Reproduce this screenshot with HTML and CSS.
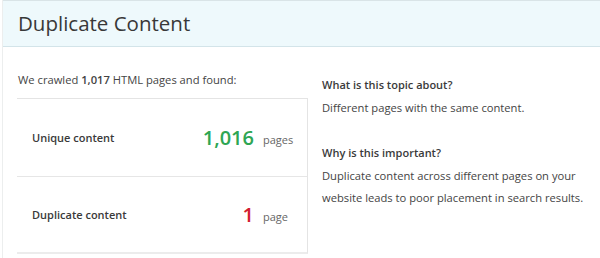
FILE: index.html
```html
<!DOCTYPE html>
<html lang="en">
<head>
    <meta charset="UTF-8">
    <title>Duplicate Content</title>
    <link rel="stylesheet" href="styles.css">
</head>
<body>
    <div class="report-card">
        <div class="report-header">
            <h1>Duplicate Content</h1>
        </div>

        <div class="report-body">
            <div class="summary">
                <p class="intro">We crawled <strong>1,017</strong> HTML pages and found:</p>
                <div class="stats-box">
                    <div class="stat-row">
                        <span class="stat-label">Unique content</span>
                        <span class="stat-value good">1,016</span>
                        <span class="stat-unit">pages</span>
                    </div>
                    <div class="stat-row">
                        <span class="stat-label">Duplicate content</span>
                        <span class="stat-value bad">1</span>
                        <span class="stat-unit">page</span>
                    </div>
                </div>
            </div>

            <div class="explain">
                <h3>What is this topic about?</h3>
                <p>Different pages with the same content.</p>
                <h3 class="second">Why is this important?</h3>
                <p>Duplicate content across different pages on your website leads to poor placement in search results.</p>
            </div>
        </div>
    </div>
</body>
</html>
```

FILE: styles.css
```css
body {
    margin: 0;
    font-family: 'Open Sans', 'Noto Sans', Arial, sans-serif;
    color: #444;
    background-color: #fff;
}
.report-card {
    margin-left: 2px;
    border-left: 1px solid #eceeee;
    min-height: 258px;
}
.report-header {
    height: 45px;
    background-color: #eef9fc;
    border-top: 1px solid #d9e4e7;
    border-bottom: 1px solid #d3e4e9;
    padding-left: 15px;
}
.report-header h1 {
    margin: 0;
    font-size: 20.5px;
    font-weight: normal;
    line-height: 45px;
    color: #383838;
}
.report-body {
    display: flex;
    padding: 22px 0 0 14px;
}
.summary {
    width: 291px;
}
.intro {
    margin: 0 0 7px 1px;
    font-size: 11.2px;
    line-height: 22px;
    color: #444;
}
.intro strong {
    font-weight: 600;
}
.stats-box {
    border-top: 1px solid #e4e4e4;
    border-right: 1px solid #e4e4e4;
    border-bottom: 2px solid #ececec;
}
.stat-row {
    display: flex;
    align-items: center;
    height: 77px;
    padding: 0 8px 0 15px;
}
.stat-row + .stat-row {
    border-top: 1px solid #e6e6e6;
    height: 75px;
}
.stat-label {
    flex: 1;
    font-size: 11px;
    font-weight: 600;
    color: #3a3a3a;
}
.stat-value {
    font-size: 20px;
    font-weight: 600;
    margin-right: 9px;
}
.stat-value.good {
    color: #2ea653;
}
.stat-value.bad {
    color: #d21f30;
}
.stat-unit {
    width: 36px;
    font-size: 11px;
    color: #666;
    padding-top: 4px;
}
.explain {
    margin: 5px 0 0 14px;
    width: 264px;
}
.explain h3 {
    margin: 0;
    font-size: 11px;
    font-weight: 600;
    line-height: 22px;
    color: #3a3a3a;
}
.explain h3.second {
    margin-top: 23px;
}
.explain p {
    margin: 1px 0 0;
    font-size: 11.2px;
    line-height: 22px;
    color: #444;
}
```
